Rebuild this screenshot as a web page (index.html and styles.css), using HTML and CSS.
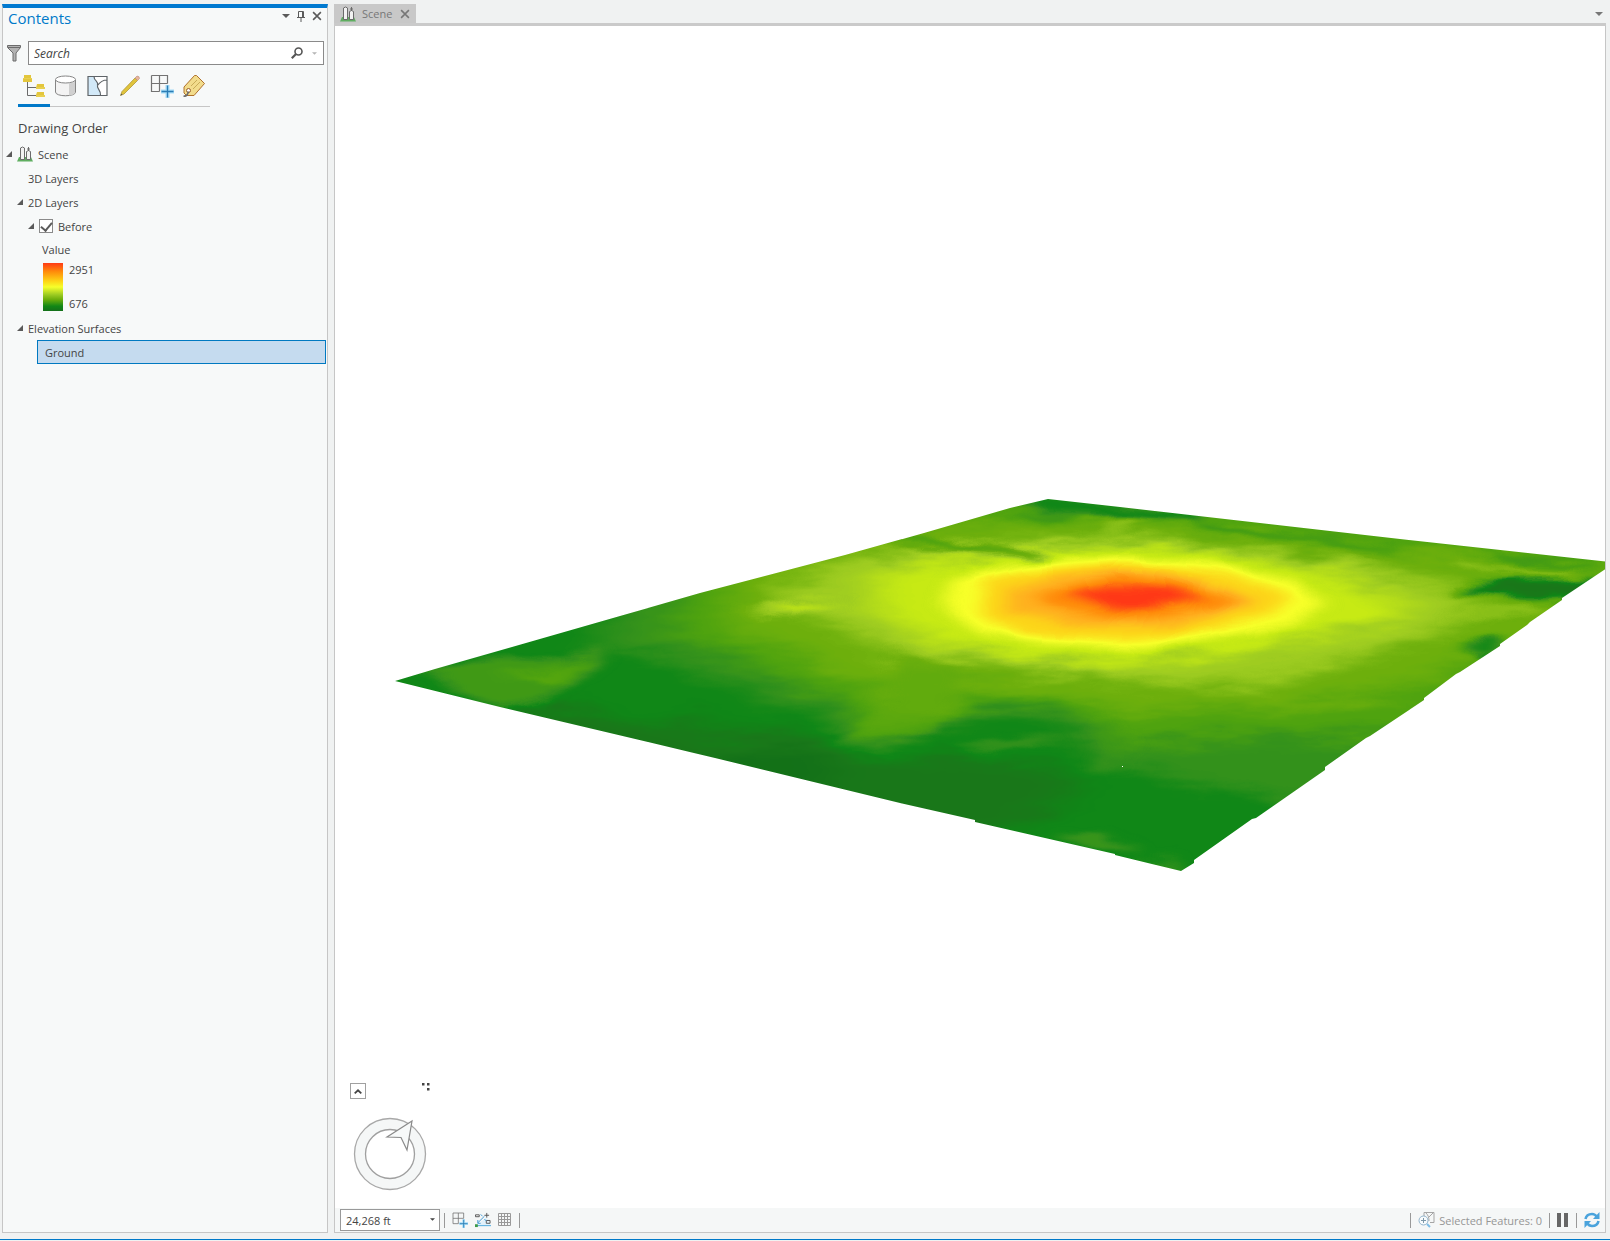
FILE: index.html
```html
<!DOCTYPE html>
<html lang="en">
<head>
  <meta charset="UTF-8">
  <meta name="viewport" content="width=device-width, initial-scale=1.0">
  <title>Scene</title>
  <link rel="stylesheet" href="styles.css">
</head>
<body>
  <svg class="defs" width="0" height="0" aria-hidden="true">
    <symbol id="icon-scene" viewBox="0 0 16 16">
      <path d="M0 15.500 2 11h12l2 4.500z" fill="#5fae60"/>
      <path d="M3.500 13.500V2q2-2 4 0v11.500zM9.500 13.500V5.500q2-2 4 0v8z" fill="#f2f2f2" stroke="#6b6b6b"/>
      <path d="M11.500 1v4M10 3h3" stroke="#6b6b6b"/>
    </symbol>
    <symbol id="icon-close" viewBox="0 0 9 9">
      <path d="M1 1l7 7M8 1 1 8" fill="none" stroke="currentColor" stroke-width="1.400"/>
    </symbol>
    <symbol id="icon-down" viewBox="0 0 8 4">
      <path d="M0 0h8L4 4z" fill="currentColor"/>
    </symbol>
    <symbol id="icon-grid-add" viewBox="0 0 24 24">
      <path d="M1.500 1.500h16v8M1.500 1.500v16h8M9.500 1.500v16M1.500 9.500h16" fill="none" stroke="#737373" stroke-width="1.200"/>
      <path d="M17.500 11v13M11 17.500h13" stroke="#a5dcf7" stroke-width="4"/>
      <path d="M17.500 11.500v12M11.500 17.500h12" stroke="#2b7cb5" stroke-width="1.300"/>
    </symbol>
  </svg>

  <div class="app">
    <aside class="panel">
      <header class="panel-header">
        <h1>Contents</h1>
        <button class="icon-btn" aria-label="Menu"><svg width="8" height="4"><use href="#icon-down"/></svg></button>
        <button class="icon-btn" aria-label="Auto hide">
          <svg width="8" height="11" viewBox="0 0 8 11"><path d="M1.500 6.500v-6h5v6M0 6.500h8M4 7v4M5.500 1v5" fill="none" stroke="#5a5a5a"/></svg>
        </button>
        <button class="icon-btn" aria-label="Close"><svg width="10" height="10"><use href="#icon-close"/></svg></button>
      </header>

      <div class="search-row">
        <svg width="14" height="17" viewBox="0 0 14 17"><path d="M.5.5h13v2L9 8v8H6V8L.5 2.500z" fill="#b3b3b3" stroke="#6b6b6b"/><path d="M1 2.500h12" stroke="#6b6b6b"/></svg>
        <div class="search-box">
          <input type="text" placeholder="Search" aria-label="Search">
          <button class="icon-btn" aria-label="Find">
            <svg width="12" height="12" viewBox="0 0 12 12"><circle cx="7.500" cy="4.500" r="3.500" fill="none" stroke="#555" stroke-width="1.600"/><path d="M5 7 .8 11.200" stroke="#555" stroke-width="2.200"/></svg>
          </button>
          <button class="icon-btn search-more" aria-label="Search options"><svg width="5" height="3"><use href="#icon-down"/></svg></button>
        </div>
      </div>

      <nav class="view-tabs">
        <button class="view-tab active" aria-label="List by drawing order">
          <svg width="24" height="24" viewBox="0 0 24 24">
            <path d="M5.500 8v13.500H15M5.500 13.500H15" fill="none" stroke="#6b6b6b"/>
            <path d="M2 1h7v3H2zM1 5h9v3H1zM15 10h7v4h-8zM15 18h7v3h-8z" fill="#e3c63c"/>
            <path d="M1 4h9v1H1zM14 13h9v2h-9zM14 21h9v2h-9z" fill="#e8d050"/>
          </svg>
        </button>
        <button class="view-tab" aria-label="List by data source">
          <svg width="24" height="24" viewBox="0 0 24 24">
            <path d="M1.500 6v12c0 5 20 5 20 0V6" fill="#f3f3f3" stroke="#858585"/>
            <path d="M15 9.500c3-.5 6-1.500 6-3V18c0 1.500-2 3-6 3.500z" fill="#d0d0d0"/>
            <ellipse cx="11.500" cy="5.500" rx="10" ry="3.500" fill="#fff" stroke="#858585"/>
          </svg>
        </button>
        <button class="view-tab" aria-label="List by selection">
          <svg width="24" height="24" viewBox="0 0 24 24">
            <path d="M2 2.500h19v19H2z" fill="#fff"/>
            <path d="M2 2.500h6c0 5 5 4 3.500 9-1 3 4 5 3 10H2z" fill="#d2e9f8"/>
            <path d="M2 2.500h19v19H2zM8 2.500c0 5 5 4 3.500 9-1 3 4 5 3 10M11.500 11.500C14 8 17 6 21 6" fill="none" stroke="#5f6468" stroke-width="1.200"/>
          </svg>
        </button>
        <button class="view-tab" aria-label="List by editing">
          <svg width="24" height="24" viewBox="0 0 24 24">
            <path d="m2.500 21.500 1.500-4L17 4l2.500 2.500L6 20z" fill="#e0c43c" stroke="#a88f2c" stroke-width=".7"/>
            <path d="m17 4 2-2q2.500 0 2.500 2.500l-2 2z" fill="#e8b49c" stroke="#b78b78" stroke-width=".6"/>
            <path d="m2.500 21.500.8-2 1.200 1.200z" fill="#555"/>
          </svg>
        </button>
        <button class="view-tab" aria-label="List by snapping"><svg width="24" height="24"><use href="#icon-grid-add"/></svg></button>
        <button class="view-tab" aria-label="List by labeling">
          <svg width="24" height="24" viewBox="0 0 24 24">
            <path d="M2 13 12.500 1.500l2 0L22.500 9.500 12 21.500H4.500L2 19z" fill="#f2dc8c" stroke="#b0722c"/>
            <path d="m9 12 6-6M11 15l7-7" stroke="#c8ac58" fill="none"/>
            <circle cx="6.500" cy="16.500" r="2" fill="#fff" stroke="#9a5f28"/>
            <path d="M6.500 17.500c-1 4-3 5-5 4.500" fill="none" stroke="#6b6b6b" stroke-width="1.500"/>
          </svg>
        </button>
      </nav>

      <h2>Drawing Order</h2>
      <ul class="tree">
        <li>
          <div class="row"><i class="twisty"></i><svg width="16" height="16"><use href="#icon-scene"/></svg><span>Scene</span></div>
          <ul>
            <li><div class="row leaf">3D Layers</div></li>
            <li>
              <div class="row"><i class="twisty"></i>2D Layers</div>
              <ul>
                <li>
                  <div class="row"><i class="twisty"></i><label class="layer"><input type="checkbox" checked>Before</label></div>
                  <div class="legend">
                    <p>Value</p>
                    <div class="legend-body">
                      <div class="ramp"></div>
                      <div class="ramp-values"><span>2951</span><span>676</span></div>
                    </div>
                  </div>
                </li>
              </ul>
            </li>
            <li>
              <div class="row"><i class="twisty"></i>Elevation Surfaces</div>
              <div class="row selected">Ground</div>
            </li>
          </ul>
        </li>
      </ul>
    </aside>

    <main class="view">
      <div class="tab-bar">
        <div class="tab"><svg width="16" height="16"><use href="#icon-scene"/></svg><span>Scene</span><button class="icon-btn" aria-label="Close tab"><svg width="10" height="10"><use href="#icon-close"/></svg></button></div>
        <button class="icon-btn tab-menu" aria-label="Tab list"><svg width="8" height="4"><use href="#icon-down"/></svg></button>
      </div>

      <div class="map">
        <svg class="terrain" viewBox="335 26 1270 1182" preserveAspectRatio="xMidYMid slice" role="img" aria-label="Elevation surface">
          <defs>
            <clipPath id="outline">
              <path d="M395 681 435 669 512 647 620 616 700 593 845 555 924 533 1010 508 1048 499 1120 507 1400 539 1610 562V566L1562 598V600L1530 622 1527 625 1500 644V646L1460 672 1456 674 1424 698V700L1370 736 1366 738 1325 767V770L1256 818 1252 819 1194 860V863L1181 871 1115 855V854L975 822V820L900 803 715 758 500 707z"/>
            </clipPath>
            <!-- heights are drawn in grey, then recoloured with the elevation ramp -->
            <filter id="ramp" filterUnits="userSpaceOnUse" x="335" y="440" width="1290" height="480" color-interpolation-filters="sRGB">
              <feComponentTransfer>
                <feFuncR type="table" tableValues=".06 .10 .06 .20 .31 .43 .62 .78 .97 .99 1 1 1"/>
                <feFuncG type="table" tableValues=".43 .47 .53 .57 .64 .69 .80 .92 1 .84 .70 .54 .22"/>
                <feFuncB type="table" tableValues=".09 .10 .09 .11 .06 .05 .13 .08 .16 .10 .12 .04 .09"/>
              </feComponentTransfer>
            </filter>
            <filter id="soft" filterUnits="userSpaceOnUse" x="300" y="420" width="1400" height="520" color-interpolation-filters="sRGB">
              <feTurbulence type="fractalNoise" baseFrequency=".012 .05" numOctaves="4" seed="4" result="noise"/>
              <feGaussianBlur in="SourceGraphic" stdDeviation="20 7" result="blurred"/>
              <feDisplacementMap in="blurred" in2="noise" scale="34" xChannelSelector="R" yChannelSelector="G"/>
            </filter>
            <filter id="fine" filterUnits="userSpaceOnUse" x="300" y="420" width="1400" height="520" color-interpolation-filters="sRGB">
              <feTurbulence type="fractalNoise" baseFrequency=".015 .05" numOctaves="3" seed="9" result="noise"/>
              <feGaussianBlur in="SourceGraphic" stdDeviation="8 3" result="blurred"/>
              <feDisplacementMap in="blurred" in2="noise" scale="20" xChannelSelector="R" yChannelSelector="G"/>
            </filter>
            <filter id="peak" filterUnits="userSpaceOnUse" x="850" y="480" width="600" height="240" color-interpolation-filters="sRGB">
              <feTurbulence type="fractalNoise" baseFrequency=".02 .04" numOctaves="2" seed="2" result="noise"/>
              <feGaussianBlur in="SourceGraphic" stdDeviation="9 4" result="blurred"/>
              <feDisplacementMap in="blurred" in2="noise" scale="9" xChannelSelector="R" yChannelSelector="G"/>
            </filter>
          </defs>
          <g clip-path="url(#outline)">
            <g filter="url(#ramp)">
              <path d="M335 440h1290v480H335z" fill="#2b2b2b"/>
              <g filter="url(#soft)">
                <path d="M300 420h1400v520H300z" fill="#2b2b2b"/>
                <path d="M490 712 578 703 637 727 700 716 696 737 775 727 894 757 1000 763 1054 757 1081 780 1058 803 1013 828 900 880 700 800z" fill="#151515"/>
                <path d="M690 770 716 752 795 747 835 762 820 800z" fill="#080808"/>
                <path d="M560 570 623 613 591 647 716 672 767 702 827 715 835 742 862 752 934 735 986 712 1040 722 1081 732 1104 780 1126 765 1190 785 1262 795 1326 800 1700 780V420H800z" fill="#404040"/>
                <path d="M600 540 690 592 657 637 736 652 775 682 850 700 850 728 934 732 968 710 1000 700 1081 715 1104 750 1172 737 1389 737 1700 710V420H800z" fill="#555"/>
                <path d="M700 540 738 587 724 623 775 653 835 673 876 683 868 710 953 715 961 685 1036 692 1126 712 1290 707 1398 692 1466 665 1700 650V570L1489 560 1398 550 1217 527 1145 517 1036 515 945 525 850 530z" fill="#6a6a6a"/>
                <path d="M760 590 820 617 870 642 914 665 1036 667 1117 677 1217 692 1296 673 1386 650 1463 625 1473 590 1373 564 1244 547 1126 535 1058 540 945 548 860 556z" fill="#808080"/>
                <path d="M870 588 890 622 940 646 1013 655 1126 662 1194 655 1285 645 1406 616 1390 588 1272 562 1172 547 1081 546 980 552 900 566z" fill="#959595"/>
              </g>
              <g filter="url(#fine)">
                <path d="M425 672 499 658 550 660 608 652 582 680 538 702 499 709z" fill="#4a4a4a"/>
                <path d="M490 678 550 672 598 656 560 682z" fill="#5c5c5c"/>
                <path d="M740 613 790 602 845 601 800 613z" fill="#909090"/>
                <path d="M900 650 960 672 965 700 930 728 880 738 848 735 880 705z" fill="#606060" opacity=".7"/>
                <path d="M894 541Q990 542 1055 563" fill="none" stroke="#4a4a4a" stroke-width="6"/>
                <path d="M1010 504 1048 495 1200 512 1200 522 1060 512z" fill="#2b2b2b"/>
                <path d="M1000 520 1048 512 1090 518 1060 524zM1200 522 1400 546 1400 552 1200 531z" fill="#484848"/>
                <path d="M1090 534 1120 514 1150 520 1120 534z" fill="#777"/>
                <path d="M1450 590 1502 580 1625 576V592L1530 600z" fill="#151515"/>
                <path d="M1455 644 1510 640 1490 658z" fill="#2b2b2b"/>
                <path d="M1480 554 1600 564 1600 570 1510 564z" fill="#444"/>
                <path d="M1460 564 1580 572M1450 617 1540 610" stroke="#808080" stroke-width="5"/>
                <path d="M950 748 1036 735 1060 742 990 755z" fill="#404040"/>
                <path d="M1100 720 1100 775 1116 770 1130 740z" fill="#4a4a4a" opacity=".6"/>
                <path d="M1050 832 1100 832 1140 852 1090 852zM1130 864 1170 855 1185 871z" fill="#444"/>
              </g>
              <g filter="url(#peak)">
                <path d="M950 580 943 605 975 632 1036 643 1145 650 1217 636 1298 624 1325 602 1290 580 1217 563 1126 557 1036 562z" fill="#aaa"/>
                <path d="M985 578 980 614 1024 636 1126 641 1190 635 1278 613 1290 596 1226 573 1126 564 1024 571z" fill="#bfbfbf"/>
                <path d="M1008 590 1008 612 1081 627 1172 627 1260 602 1194 578 1126 568 1058 575z" fill="#d5d5d5"/>
                <path d="M1038 594 1046 606 1126 621 1175 614 1245 599 1180 582 1117 574z" fill="#eaeaea"/>
                <path d="M1066 592 1110 608 1135 610 1205 599 1175 588 1110 585z" fill="#fff"/>
              </g>
            </g>
          </g>
          <path d="M1122 766h1v1h-1z" fill="#fff"/>
        </svg>

        <div class="navigator">
          <div class="navigator-top">
            <button class="collapse" aria-label="Show full control"><svg width="8" height="5" viewBox="0 0 8 5"><path d="m.7 4.300 3.300-3 3.300 3" fill="none" stroke="#444" stroke-width="1.800"/></svg></button>
            <svg width="8" height="8" viewBox="0 0 8 8"><path d="M0 0h2.500v2.500H0zM5 0h2.500v2.500H5zM5 5h2.500v2.500H5z" fill="#444"/></svg>
          </div>
          <svg class="compass" width="74" height="74" viewBox="0 0 74 74">
            <circle cx="37" cy="37" r="35.500" fill="#f5f7f7" stroke="#a8a8a8" stroke-width="1.300"/>
            <circle cx="37" cy="37" r="24.500" fill="#fff" stroke="#9f9f9f" stroke-width="1.300"/>
            <path d="M59 4 34 20l14 .5L54 33z" fill="#f7f9f9" stroke="#8a8a8a" stroke-width="1.200"/>
          </svg>
        </div>
      </div>

      <footer class="status">
        <div class="scale">
          <select aria-label="Camera height"><option>24,268 ft</option></select>
          <svg width="5" height="3"><use href="#icon-down"/></svg>
        </div>
        <span class="sep"></span>
        <button class="icon-btn" aria-label="Snapping"><svg width="16" height="16"><use href="#icon-grid-add"/></svg></button>
        <button class="icon-btn" aria-label="Infer constraints">
          <svg width="16" height="16" viewBox="0 0 17 16">
            <path d="M2 14 12 5l5 9z" fill="#e0f1fb"/>
            <path d="M.5 2.500h4v2h-4zM12 8.500h4v3h-4zM10 3h5M12.500.5v5" fill="none" stroke="#555"/>
            <path d="m3 11 7-7M3 8v3.500h3M6 2l2 2M10 7l2 2" fill="none" stroke="#3c97d3"/>
            <path d="M2 14h15" stroke="#4aa6dd"/><path d="M0 12.500h3v3H0z" fill="#3c9a4b"/>
          </svg>
        </button>
        <button class="icon-btn" aria-label="Grid">
          <svg width="14" height="14" viewBox="0 0 14 14"><path d="M.5.500h12v12H.5zM3.500 0v13M6.500 0v13M9.500 0v13M0 3.500h13M0 6.500h13M0 9.500h13" fill="none" stroke="#999"/></svg>
        </button>
        <span class="sep"></span>
        <div class="spacer"></div>
        <span class="sep"></span>
        <button class="selected-features">
          <svg width="17" height="16" viewBox="0 0 17 16">
            <path d="M6 4V.5h10v10h-4M8 1c2 2 3 4 3 8M11 5l4-4" fill="none" stroke="#a5a5a5"/>
            <circle cx="5.500" cy="8.500" r="4.500" fill="#f7fbfd" stroke="#92b4cc"/>
            <path d="M3 8.500h5M5.500 6v5" stroke="#7d97a8"/><path d="m9 12 3 3" stroke="#7fbde6" stroke-width="2"/>
          </svg>
          <span>Selected Features: 0</span>
        </button>
        <span class="sep"></span>
        <button class="icon-btn" aria-label="Pause drawing"><svg width="12" height="14" viewBox="0 0 12 14"><path d="M0 0h4v14H0zM7 0h4v14H7z" fill="#666"/></svg></button>
        <span class="sep"></span>
        <button class="icon-btn" aria-label="Refresh">
          <svg width="16" height="16" viewBox="0 0 16 16"><path d="M1.500 7q1-5 6.500-5 3 0 5 3M14.500 9q-1 5-6.500 5-3 0-5-3" fill="none" stroke="#4aa3dc" stroke-width="2.600"/><path d="M15.500 0v7H9zM.5 16V9H7z" fill="#4aa3dc"/></svg>
        </button>
      </footer>
    </main>
  </div>
</body>
</html>
```
FILE: styles.css
```css
* {
  box-sizing: border-box;
}
body {
  margin: 0;
  font-family: 'Open Sans', 'Noto Sans', sans-serif;
  font-size: 11px;
  color: #444;
  background-color: #f0f2f2;
}
svg {
  display: block;
  flex: none;
}
button {
  font: inherit;
  color: inherit;
  background: none;
  border: none;
  padding: 0;
}
h1, h2, p, ul {
  margin: 0;
  padding: 0;
  font-weight: normal;
}
ul {
  list-style: none;
}
.defs {
  position: absolute;
}
.app {
  display: flex;
  gap: 6px;
  height: calc(100vh - 1px);
  padding: 4px 4px 6px 2px;
  border-bottom: 1px solid #0079c9;
}
.icon-btn {
  display: flex;
  align-items: center;
  justify-content: center;
  color: #5a5a5a;
}

/* contents panel */
.panel {
  flex: none;
  width: 326px;
  background-color: #f7f9f9;
  border: 1px solid #c6c6c6;
  border-top: 4px solid #0079d0;
}
.panel-header {
  display: flex;
  align-items: flex-start;
  gap: 7px;
  height: 33px;
  padding: 0 5px;
}
.panel-header h1 {
  flex: 1;
  font-size: 15px;
  line-height: 21px;
  color: #0079c9;
}
.panel-header .icon-btn {
  height: 16px;
}
.search-row {
  display: flex;
  align-items: center;
  gap: 7px;
  padding: 0 3px 0 4px;
}
.search-box {
  display: flex;
  flex: 1;
  align-items: center;
  gap: 9px;
  height: 24px;
  padding: 0 6px 0 5px;
  background-color: #fff;
  border: 1px solid #8a8a8a;
}
.search-box input {
  flex: 1;
  min-width: 0;
  padding: 0;
  border: none;
  outline: none;
  background: none;
  font: italic 12px 'Open Sans', 'Noto Sans', sans-serif;
}
.search-box input::placeholder {
  color: #444;
}
.search-more {
  color: #b5b5b5;
}
.view-tabs {
  display: flex;
  width: 192px;
  margin: 9px 0 0 15px;
  border-bottom: 1px solid #c6c6c6;
}
.view-tab {
  display: flex;
  justify-content: center;
  width: 32px;
  height: 33px;
  margin-bottom: -1px;
}
.view-tab.active {
  border-bottom: 3px solid #0079c9;
}
.panel h2 {
  margin: 9px 0 2px 15px;
  font-size: 13px;
  line-height: 24px;
}

/* layer tree */
.row {
  display: flex;
  align-items: center;
  height: 24px;
  padding-left: 3px;
}
.row svg {
  margin-right: 5px;
}
.tree ul {
  padding-left: 11px;
}
.twisty {
  width: 6px;
  height: 6px;
  margin-right: 5px;
  background-color: #5a5a5a;
  clip-path: polygon(100% 0, 100% 100%, 0 100%);
}
.leaf {
  padding-left: 14px;
}
.layer {
  display: flex;
  align-items: center;
  gap: 5px;
}
.layer input {
  display: grid;
  place-items: center;
  width: 14px;
  height: 14px;
  margin: 0;
  appearance: none;
  background-color: #fff;
  border: 1px solid #8a8a8a;
}
.layer input:checked::before {
  content: "";
  width: 5px;
  height: 9px;
  margin-bottom: 2px;
  border: solid #5a5a5a;
  border-width: 0 2px 2px 0;
  transform: rotate(40deg);
}
.legend {
  padding: 0 0 5px 17px;
}
.legend p {
  line-height: 23px;
}
.legend-body {
  display: flex;
  gap: 6px;
  padding-top: 2px;
}
.ramp {
  width: 20px;
  height: 48px;
  margin-left: 1px;
  background: linear-gradient(#ff3a16, #ff8c0a 18%, #fdd516 38%, #f6ff2b 50%, #9ccb22 66%, #6cae0c 76%, #118716 90%, #14701a);
}
.ramp-values {
  display: flex;
  flex-direction: column;
  justify-content: space-between;
  line-height: 14px;
}
.selected {
  margin: 0 1px 0 23px;
  padding-left: 7px;
  background-color: #c5dbef;
  border: 1px solid #0079c1;
}

/* scene view */
.view {
  display: flex;
  flex: 1;
  flex-direction: column;
  min-width: 0;
}
.tab-bar {
  display: flex;
  align-items: stretch;
  justify-content: space-between;
  height: 22px;
  border-bottom: 3px solid #cacaca;
}
.tab {
  display: flex;
  align-items: center;
  gap: 6px;
  padding: 0 6px;
  color: #777;
  background-color: #c8c8c8;
}
.tab .icon-btn {
  margin-left: 2px;
  color: #777;
}
.tab-menu {
  margin-right: 3px;
  color: #777;
}
.map {
  position: relative;
  flex: 1;
  min-height: 0;
  background-color: #fff;
  border: solid #c6c6c6;
  border-width: 0 1px;
}
.terrain {
  width: 100%;
  height: 100%;
}
.navigator {
  position: absolute;
  left: 15px;
  bottom: 17px;
  width: 80px;
}
.navigator-top {
  display: flex;
  justify-content: space-between;
  margin-bottom: 18px;
}
.collapse {
  display: flex;
  align-items: center;
  justify-content: center;
  width: 16px;
  height: 16px;
  background-color: #fff;
  border: 1px solid #a0a0a0;
}
.compass {
  margin-left: 3px;
}
.status {
  display: flex;
  align-items: center;
  gap: 7px;
  height: 25px;
  padding: 0 5px;
  background-color: #f5f7f7;
  border: solid #c6c6c6;
  border-width: 0 1px 1px;
}
.scale {
  position: relative;
  width: 100px;
}
.scale select {
  display: block;
  width: 100%;
  height: 22px;
  padding: 0 5px;
  appearance: none;
  font: inherit;
  color: #444;
  background-color: #fff;
  border: 1px solid #999;
  border-radius: 0;
}
.scale svg {
  position: absolute;
  top: 9px;
  right: 5px;
}
.sep {
  width: 1px;
  height: 15px;
  background-color: #999;
}
.scale + .sep {
  margin-left: -3px;
}
.spacer {
  flex: 1;
}
.selected-features {
  display: flex;
  align-items: center;
  gap: 4px;
  color: #969696;
}
```
